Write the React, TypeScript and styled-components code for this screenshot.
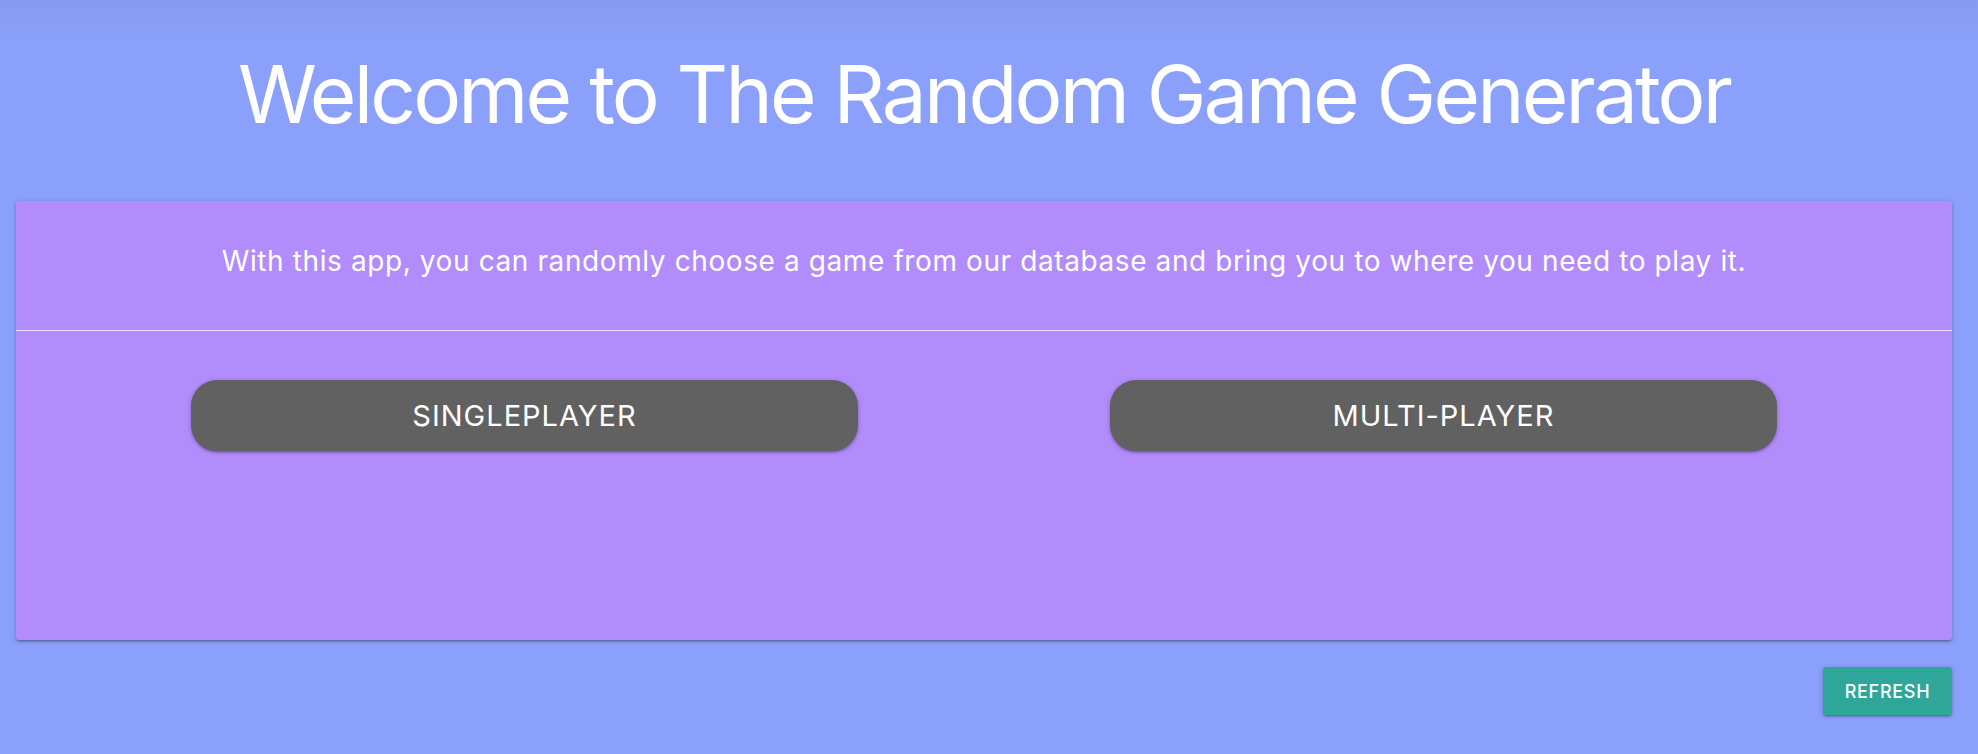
import React from 'react';
import styled, { createGlobalStyle } from 'styled-components';

const GlobalStyle = createGlobalStyle`
  html, body {
    margin: 0;
    padding: 0;
  }
  body {
    min-height: 754px;
    background: linear-gradient(to bottom, #869bef 0px, #8ba0fa 40px, #8ba0fa 100%);
    font-family: Inter, 'Noto Sans', sans-serif;
    color: #fff;
  }
`;

const Page = styled.div`
  display: flex;
  flex-direction: column;
  padding: 0 26px 0 16px;
`;

const Title = styled.h1`
  margin: 50px 0 63px;
  text-align: center;
  font-size: 80px;
  line-height: 88px;
  font-weight: 400;
  letter-spacing: -2.8px;
  color: #fff;
`;

const Card = styled.section`
  height: 439px;
  background: #b28cfb;
  border-radius: 3px;
  box-shadow: 0 2px 2px 0 rgba(0, 0, 0, 0.14), 0 3px 1px -2px rgba(0, 0, 0, 0.12),
    0 1px 5px 0 rgba(0, 0, 0, 0.2);
  display: flex;
  flex-direction: column;
`;

const Intro = styled.div`
  box-sizing: border-box;
  height: 130px;
  padding-top: 44px;
  border-bottom: 1px solid rgba(255, 255, 255, 0.75);
  text-align: center;
  font-size: 28px;
  line-height: 32px;
  letter-spacing: 0.6px;
`;

const Choices = styled.div`
  display: grid;
  grid-template-columns: 1fr 1fr;
  padding: 49px 49px 0;
  justify-items: center;
`;

const ModeButton = styled.button`
  width: 667px;
  height: 71px;
  border: none;
  border-radius: 26px;
  background: #616161;
  color: #fff;
  font-family: Inter, 'Noto Sans', sans-serif;
  font-size: 29px;
  font-weight: 400;
  letter-spacing: 1px;
  text-transform: uppercase;
  cursor: pointer;
  box-shadow: 0 2px 2px 0 rgba(0, 0, 0, 0.14), 0 3px 1px -2px rgba(0, 0, 0, 0.12),
    0 1px 5px 0 rgba(0, 0, 0, 0.2);
`;

const Footer = styled.div`
  display: flex;
  justify-content: flex-end;
  margin-top: 27px;
`;

const RefreshButton = styled.button`
  width: 129px;
  height: 48px;
  border: none;
  border-radius: 3px;
  background: #2ea79a;
  color: #fff;
  font-family: Inter, 'Noto Sans', sans-serif;
  font-size: 18px;
  font-weight: 500;
  letter-spacing: 0.7px;
  text-transform: uppercase;
  cursor: pointer;
  box-shadow: 0 2px 2px 0 rgba(0, 0, 0, 0.14), 0 3px 1px -2px rgba(0, 0, 0, 0.12),
    0 1px 5px 0 rgba(0, 0, 0, 0.2);
`;

const App = () => {
  return (
    <>
      <GlobalStyle />
      <Page>
        <Title>Welcome to The Random Game Generator</Title>
        <Card>
          <Intro>
            With this app, you can randomly choose a game from our database and bring you to where
            you need to play it.
          </Intro>
          <Choices>
            <ModeButton>Singleplayer</ModeButton>
            <ModeButton>Multi-player</ModeButton>
          </Choices>
        </Card>
        <Footer>
          <RefreshButton>Refresh</RefreshButton>
        </Footer>
      </Page>
    </>
  );
};

export default App;
